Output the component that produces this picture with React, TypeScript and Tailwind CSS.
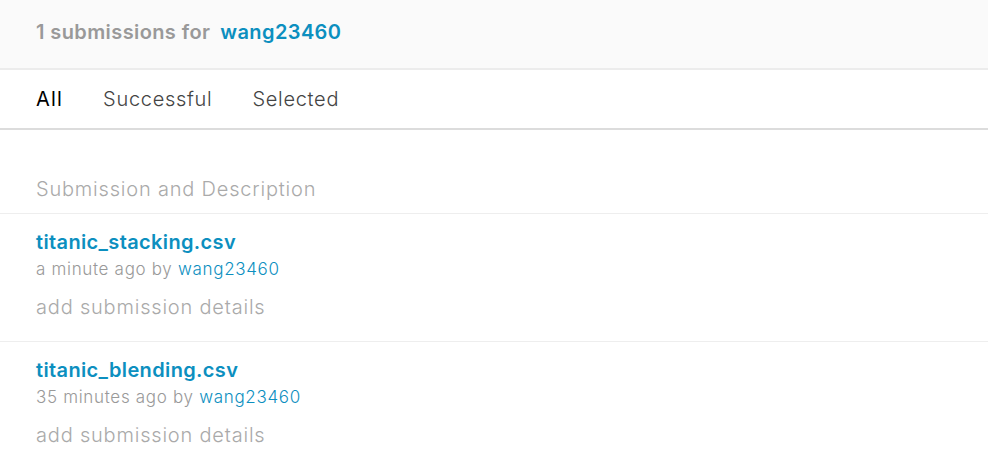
export default function App() {
  const rows = [
    { file: 'titanic_stacking.csv', when: 'a minute ago' },
    { file: 'titanic_blending.csv', when: '35 minutes ago' },
  ];

  return (
    <div className="min-h-[456px] w-[988px] bg-white font-['Inter',sans-serif]">
      {/* Header */}
      <div className="flex h-[68px] items-center bg-[#fafafa] px-9 pb-[4px] text-[20px] font-semibold tracking-[0.02em]">
        <span className="text-[#999]">1 submissions for</span>
        <span className="ml-[10px] text-[#0c8fbf]">wang23460</span>
      </div>

      {/* Tabs */}
      <div className="flex h-[62px] items-center gap-[40px] border-y-2 border-t-[#ececec] border-b-[#dcdcdc] px-9 text-[20px] tracking-[0.035em]">
        <span className="text-black tracking-[0.06em]">All</span>
        <span className="font-light text-[#444]">Successful</span>
        <span className="font-light text-[#444]">Selected</span>
      </div>

      <div className="pt-[44px]">
        <div className="border-b border-[#eee] px-9 pb-[9px] text-[20px] font-light tracking-[0.04em] text-[#aaa]">
          Submission and Description
        </div>
        {rows.map((r) => (
          <div key={r.file} className="border-b border-[#eee] px-9 pt-[15px] pb-[21px]">
            <div className="text-[20px] leading-[26px] font-semibold tracking-[0.018em] text-[#0c8fbf]">
              {r.file}
            </div>
            <div className="mt-[2px] text-[17px] leading-[24px] font-light tracking-[0.04em] text-[#999]">
              {r.when} by <span className="text-[#0c8fbf]">wang23460</span>
            </div>
            <div className="mt-[13px] text-[20px] leading-[26px] font-light tracking-[0.04em] text-[#aaa]">
              add submission details
            </div>
          </div>
        ))}
      </div>
    </div>
  );
}
